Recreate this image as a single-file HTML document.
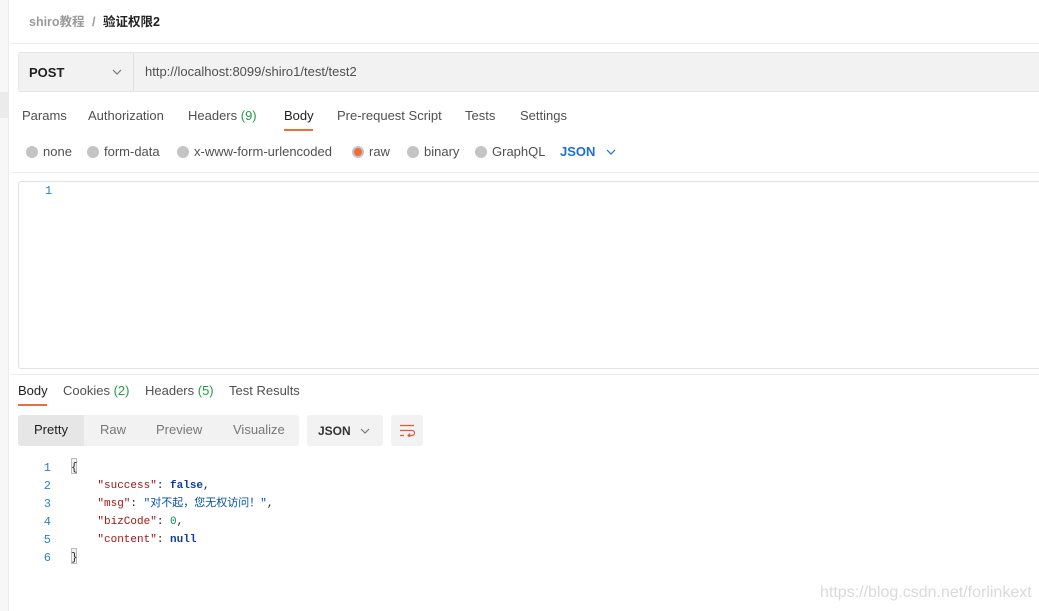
<!DOCTYPE html>
<html><head><meta charset="utf-8"><style>
*{margin:0;padding:0;box-sizing:border-box}
body{width:1039px;height:611px;overflow:hidden;background:#fff;font-family:"Liberation Sans","Noto Sans CJK SC",sans-serif;font-size:13px;color:#505050;position:relative}
.a{position:absolute;white-space:nowrap}
.r{display:inline-block;width:12px;height:12px;border-radius:50%;background:#c4c4c4;vertical-align:-2px;margin-right:5px}
.mono{font-family:"Liberation Mono","Noto Sans CJK SC",monospace;font-size:11px}
.g{color:#249c47}
</style></head><body>
<div class="a" style="left:0;top:0;width:9px;height:611px;background:#f7f7f7;border-right:1px solid #ececec"></div>
<div class="a" style="left:0;top:92px;width:9px;height:26px;background:#ebebeb"></div>
<div class="a" style="left:29px;top:11px;font-size:12.5px;color:#9a9a9a;font-weight:bold">shiro教程 <span style="margin:0 4px">/</span> <span style="color:#212121">验证权限2</span></div>
<div class="a" style="left:10px;top:43px;width:1029px;height:1px;background:#ededed"></div>
<div class="a" style="left:18px;top:52px;width:1030px;height:40px;background:#f2f2f2;border:1px solid #e6e6e6;border-radius:3px"></div>
<div class="a" style="left:133px;top:53px;width:1px;height:38px;background:#e0e0e0"></div>
<div class="a" style="left:29px;top:65px;font-weight:bold;color:#212121">POST</div>
<svg class="a" style="left:112px;top:68px" width="10" height="8"><path d="M1 2 L5 6 L9 2" fill="none" stroke="#777" stroke-width="1.2"/></svg>
<div class="a" style="left:145px;top:64px;color:#505050">http://localhost:8099/shiro1/test/test2</div>
<div class="a" style="left:22px;top:108px">Params</div>
<div class="a" style="left:88px;top:108px">Authorization</div>
<div class="a" style="left:188px;top:108px">Headers <span class="g">(9)</span></div>
<div class="a" style="left:284px;top:108px;color:#212121">Body</div>
<div class="a" style="left:284px;top:129px;width:29px;height:2px;background:#f26b3a"></div>
<div class="a" style="left:337px;top:108px">Pre-request Script</div>
<div class="a" style="left:465px;top:108px">Tests</div>
<div class="a" style="left:520px;top:108px">Settings</div>
<div class="a" style="left:26px;top:144px"><span class="r"></span>none</div>
<div class="a" style="left:87px;top:144px"><span class="r"></span>form-data</div>
<div class="a" style="left:177px;top:144px"><span class="r"></span>x-www-form-urlencoded</div>
<div class="a" style="left:352px;top:144px"><span class="r" style="background:#f26b3a;border:2px solid #c4c4c4"></span>raw</div>
<div class="a" style="left:407px;top:144px"><span class="r"></span>binary</div>
<div class="a" style="left:475px;top:144px"><span class="r"></span>GraphQL</div>
<div class="a" style="left:560px;top:144px;color:#1c6fd6;font-weight:bold">JSON</div>
<svg class="a" style="left:606px;top:148px" width="10" height="8"><path d="M1 2 L5 6 L9 2" fill="none" stroke="#1c6fd6" stroke-width="1.2"/></svg>
<div class="a" style="left:10px;top:172px;width:1029px;height:1px;background:#ececec"></div>
<div class="a" style="left:18px;top:181px;width:1030px;height:188px;border:1px solid #e2e2e2;border-radius:3px"></div>
<div class="a mono" style="left:45px;top:184px;color:#2a84c5;font-size:12px">1</div>
<div class="a" style="left:10px;top:374px;width:1029px;height:1px;background:#ececec"></div>
<div class="a" style="left:18px;top:383px;color:#212121">Body</div>
<div class="a" style="left:18px;top:404px;width:29px;height:2px;background:#f26b3a"></div>
<div class="a" style="left:63px;top:383px">Cookies <span class="g">(2)</span></div>
<div class="a" style="left:145px;top:383px">Headers <span class="g">(5)</span></div>
<div class="a" style="left:229px;top:383px">Test Results</div>
<div class="a" style="left:18px;top:415px;width:281px;height:31px;background:#f2f2f2;border-radius:3px"></div>
<div class="a" style="left:18px;top:415px;width:66px;height:31px;background:#e6e6e6;border-radius:3px 0 0 3px"></div>
<div class="a" style="left:34px;top:422px;color:#212121">Pretty</div>
<div class="a" style="left:100px;top:422px;color:#777">Raw</div>
<div class="a" style="left:156px;top:422px;color:#777">Preview</div>
<div class="a" style="left:233px;top:422px;color:#777">Visualize</div>
<div class="a" style="left:307px;top:415px;width:76px;height:31px;background:#f2f2f2;border-radius:3px"></div>
<div class="a" style="left:318px;top:424px;font-size:12px;font-weight:bold;color:#333">JSON</div>
<svg class="a" style="left:360px;top:427px" width="10" height="8"><path d="M1 2 L5 6 L9 2" fill="none" stroke="#777" stroke-width="1.2"/></svg>
<div class="a" style="left:391px;top:415px;width:32px;height:31px;background:#f2f2f2;border-radius:3px"></div>
<svg class="a" style="left:399px;top:424px" width="16" height="13"><path d="M1 1.5H15M1 6.5H13a2.5 2.5 0 0 1 0 5H9M11 9.5L9 11.5L11 13M1 11.5H5" fill="none" stroke="#e0593a" stroke-width="1.2"/></svg>
<div class="a mono" style="left:40px;top:459px;line-height:18px;color:#2a84c5;text-align:right;width:11px;font-size:12px">1<br>2<br>3<br>4<br>5<br>6</div>
<div class="a" style="left:71px;top:458px;width:6px;height:16px;background:#f0f0f0;border:1px solid #bbb"></div>
<div class="a" style="left:71px;top:548px;width:6px;height:16px;background:#f0f0f0;border:1px solid #bbb"></div>
<div class="a mono" style="left:71px;top:459px;line-height:18px;color:#212121">{<br>&nbsp;&nbsp;&nbsp;&nbsp;<span style="color:#a31515">"success"</span>: <span style="color:#0d3ea1;font-weight:bold">false</span>,<br>&nbsp;&nbsp;&nbsp;&nbsp;<span style="color:#a31515">"msg"</span>: <span style="color:#0451a5">"对不起，您无权访问！"</span>,<br>&nbsp;&nbsp;&nbsp;&nbsp;<span style="color:#a31515">"bizCode"</span>: <span style="color:#098658">0</span>,<br>&nbsp;&nbsp;&nbsp;&nbsp;<span style="color:#a31515">"content"</span>: <span style="color:#0d3ea1;font-weight:bold">null</span><br>}</div>
<div class="a" style="left:820px;top:584px;font-size:16px;color:#dadada">https://blog.csdn.net/forlinkext</div>
</body></html>
